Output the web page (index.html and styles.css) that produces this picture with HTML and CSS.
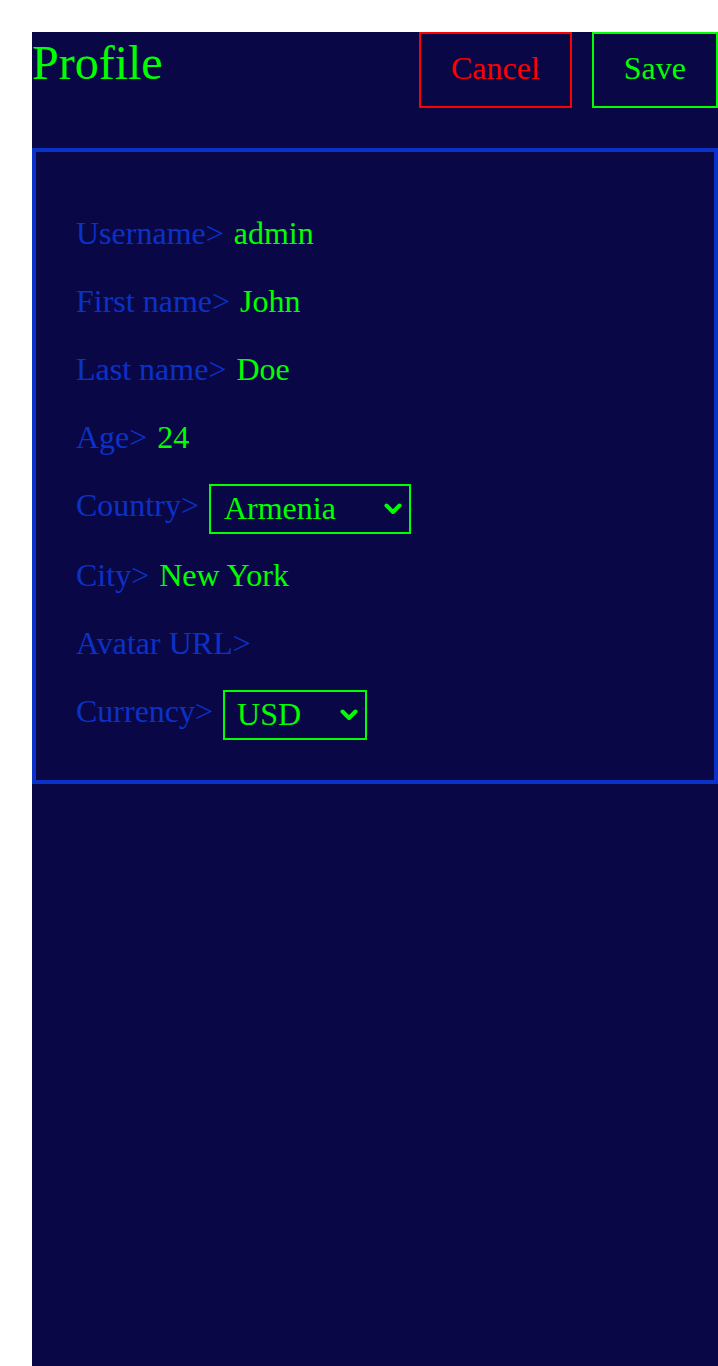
FILE: index.html
```html
<!DOCTYPE html>
<html lang="en">
<head>
<meta charset="utf-8">
<title>Profile</title>
<link rel="stylesheet" href="styles.css">
</head>
<body>
<div class="app">
  <header class="header">
    <h1 class="title">Profile</h1>
    <div class="actions">
      <button class="btn btn-cancel" type="button">Cancel</button>
      <button class="btn btn-save" type="button">Save</button>
    </div>
  </header>
  <section class="card">
    <div class="row"><span class="label">Username&gt;</span><span class="value">admin</span></div>
    <div class="row"><span class="label">First name&gt;</span><span class="value">John</span></div>
    <div class="row"><span class="label">Last name&gt;</span><span class="value">Doe</span></div>
    <div class="row"><span class="label">Age&gt;</span><span class="value">24</span></div>
    <div class="row row-select"><span class="label">Country&gt;</span>
      <span class="select-wrap">
        <select class="select select-country">
          <option>Armenia</option>
          <option>USA</option>
          <option>Russia</option>
        </select>
        <svg class="chevron" width="18" height="12" viewBox="0 0 18 12" aria-hidden="true"><polyline points="2.5,2.5 9,9 15.5,2.5" fill="none" stroke="#00ff00" stroke-width="4" stroke-linecap="round" stroke-linejoin="round"/></svg>
      </span>
    </div>
    <div class="row"><span class="label">City&gt;</span><span class="value">New York</span></div>
    <div class="row"><span class="label">Avatar URL&gt;</span><span class="value"></span></div>
    <div class="row row-select"><span class="label">Currency&gt;</span>
      <span class="select-wrap">
        <select class="select select-currency">
          <option>USD</option>
          <option>EUR</option>
          <option>AMD</option>
        </select>
        <svg class="chevron" width="18" height="12" viewBox="0 0 18 12" aria-hidden="true"><polyline points="2.5,2.5 9,9 15.5,2.5" fill="none" stroke="#00ff00" stroke-width="4" stroke-linecap="round" stroke-linejoin="round"/></svg>
      </span>
    </div>
  </section>
</div>
</body>
</html>
```

FILE: styles.css
```css
html, body {
  margin: 0;
  padding: 0;
  background: #ffffff;
}

body {
  font-family: "Liberation Serif", "Times New Roman", serif;
}

.app {
  margin: 32px 0 0 32px;
  width: 686px;
  min-height: 1334px;
  background: #0a0746;
}

.header {
  display: flex;
  justify-content: space-between;
  align-items: flex-start;
  height: 116px;
}

.title {
  margin: 0;
  padding-top: 4px;
  font-size: 48px;
  font-weight: normal;
  line-height: 53px;
  color: #00ff00;
}

.actions {
  display: flex;
  gap: 20px;
}

.btn {
  box-sizing: border-box;
  height: 76px;
  padding: 0 30px 5px;
  background: transparent;
  font-family: "Liberation Serif", "Times New Roman", serif;
  font-size: 32px;
  line-height: 36px;
  border: 2px solid;
  cursor: pointer;
}

.btn-cancel {
  color: #ff0000;
  border-color: #ff0000;
}

.btn-save {
  color: #00ff00;
  border-color: #00ff00;
}

.card {
  box-sizing: border-box;
  border: 4px solid #0a32c8;
  padding: 63px 40px 49px;
  display: flex;
  flex-direction: column;
  gap: 32px;
}

.row {
  display: flex;
  align-items: flex-start;
  gap: 8px;
  height: 36px;
  font-size: 32px;
  line-height: 36px;
}

.row-select {
  height: 38px;
  gap: 10px;
}

.label {
  color: #0a32c8;
}

.value {
  color: #00ff00;
  padding-left: 2px;
}

.select-wrap {
  position: relative;
  display: block;
  margin-top: -3px;
}

.select {
  display: block;
  box-sizing: border-box;
  height: 50px;
  padding: 0 30px 2px 13px;
  font-family: "Liberation Serif", "Times New Roman", serif;
  font-size: 32px;
  color: #00ff00;
  background-color: #0a0746;
  border: 2px solid #00ff00;
  border-radius: 0;
  appearance: none;
  -webkit-appearance: none;
}

.select-country {
  width: 202px;
}

.select-currency {
  width: 144px;
  padding-left: 12px;
}

.chevron {
  position: absolute;
  right: 9px;
  top: 19px;
  pointer-events: none;
}
```
